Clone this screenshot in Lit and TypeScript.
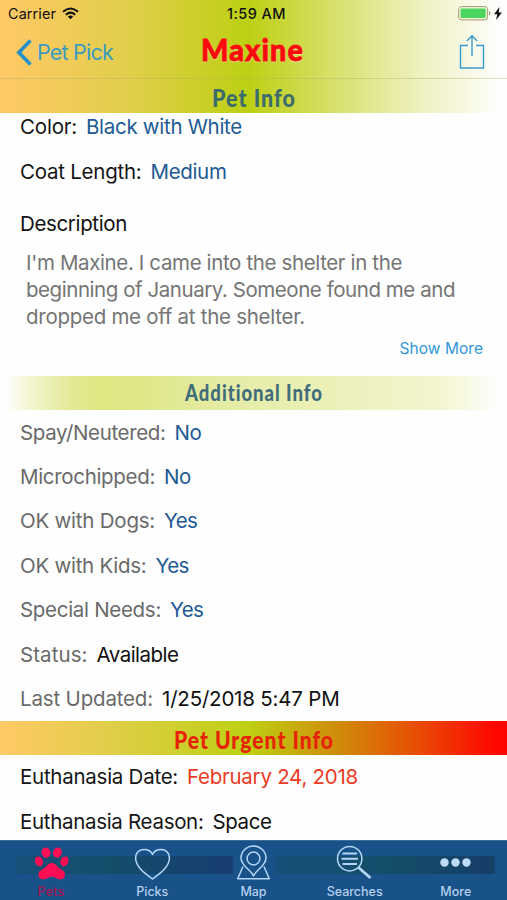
import { LitElement, html, css, svg } from "lit";
import { customElement, property } from "lit/decorators.js";

/* Text set to a given measure, either by tracking or by condensing the glyphs. */
@customElement("fit-text")
class FitText extends LitElement {
  @property() text = "";
  @property({ type: Number }) measure = 0;
  @property({ type: Boolean }) condense = false;
  static styles = css`
    :host { display: inline-block; white-space: nowrap; text-align: left; }
    .t { display: inline-block; white-space: pre; transform-origin: 0 50%; }
  `;
  updated() {
    const t = this.renderRoot.querySelector(".t") as HTMLElement;
    t.style.letterSpacing = this.condense ? "1.2px" : "0px";
    t.style.transform = "none";
    const natural = t.getBoundingClientRect().width;
    this.style.width = this.measure + "px";
    if (this.condense) t.style.transform = `scaleX(${this.measure / natural})`;
    else t.style.letterSpacing = (this.measure - natural) / this.text.length + "px";
  }
  render() {
    return html`<span class="t">${this.text}</span>`;
  }
}

type Row = [string, number, string, number, string];
const top: Row[] = [
  ["Color:", 57, "Black with White", 156, "dark blue"],
  ["Coat Length:", 121.5, "Medium", 76, "dark blue"],
];
const extra: Row[] = [
  ["Spay/Neutered:", 145.5, "No", 27, "grey blue"],
  ["Microchipped:", 135, "No", 27, "grey blue"],
  ["OK with Dogs:", 135, "Yes", 33, "grey blue"],
  ["OK with Kids:", 126.5, "Yes", 33, "grey blue"],
  ["Special Needs:", 141, "Yes", 33, "grey blue"],
  ["Status:", 67.5, "Available", 82, "grey black"],
  ["Last Updated:", 133, "1/25/2018 5:47 PM", 177.5, "grey black"],
];
const urgent: Row[] = [
  ["Euthanasia Date:", 158, "February 24, 2018", 171, "dark red"],
  ["Euthanasia Reason:", 183.5, "Space", 59, "dark black"],
];

const paw = svg`<g fill="#ff0d55">
  <ellipse cx="14" cy="7.600" rx="4.400" ry="5.200" transform="rotate(-10 14 7.600)"/>
  <ellipse cx="25.400" cy="7.600" rx="4.400" ry="5.200" transform="rotate(10 25.400 7.600)"/>
  <ellipse cx="7" cy="16.400" rx="3.900" ry="5.100" transform="rotate(-20 7 16.400)"/>
  <ellipse cx="32.400" cy="16.400" rx="3.900" ry="5.100" transform="rotate(20 32.400 16.400)"/>
  <path d="M19.700 18C22.500 18 24 20 26 22C28.500 24.500 33 25.500 33 29.500C33 33 30.500 35 27 34.300C24 33.700 22.500 31.800 19.700 31.800C17 31.800 15.500 33.700 12.400 34.300C9 35 6.400 33 6.400 29.500C6.400 25.500 11 24.500 13.400 22C15.500 20 17 18 19.700 18Z"/></g>`;
const heart = svg`<path d="M19.500 34C13 29 3 22.500 2.600 13.500C2.400 7.500 6.500 4.500 11 4.500C15 4.500 18 6 19.500 9.500C21 6 24 4.500 28 4.500C32.500 4.500 36.600 7.500 36.400 13.500C36 22.500 26 29 19.500 34Z"/>`;
const pin = svg`<path d="M19.500 31C17 25 7 20.500 7 13.200A12.500 12.300 0 0 1 32 13.200C32 20.500 22 25 19.500 31Z"/><circle cx="19.500" cy="13.500" r="6.400"/><path d="M9 21.500L3.700 33.700H35.300L30 21.500"/>`;
const search = svg`<circle cx="14.700" cy="13.700" r="12.200"/><path d="M7.500 8.500H22M6.500 13.700H23M7.500 19H22" stroke-width="2"/><path d="M23.500 22.500L35.500 33" stroke-width="2.800"/>`;
const dots = svg`<g fill="#bfdcf7" stroke="none"><circle cx="8.500" cy="17.500" r="4.200"/><circle cx="19.500" cy="17.500" r="4.200"/><circle cx="30.500" cy="17.500" r="4.200"/></g>`;

@customElement("app-root")
class AppRoot extends LitElement {
  static styles = css`
    :host { display: flex; flex-direction: column; height: 900px; overflow: hidden; background: #fefefe; font-family: Inter, "Liberation Sans", sans-serif; font-size: 20.5px; color: #111; }
    * { box-sizing: border-box; }
    svg { display: block; flex: none; }
    .head { height: 113px; flex: none; background: linear-gradient(90deg, #ffc966 0, #e2ce4c 25%, #bdd013 49%, #d8e06c 66%, #eff1c0 83%, #fefefe 99%); }
    .status { height: 26px; display: grid; grid-template-columns: 1fr auto 1fr; align-items: center; padding: 1px 5px 0 8px; font-size: 14.5px; }
    .carrier, .power { display: flex; align-items: center; gap: 6px; }
    .power { justify-content: flex-end; gap: 3px; }
    .clock { font-weight: 500; margin-left: 3px; }
    .nav { height: 53px; display: grid; grid-template-columns: 1fr auto 1fr; align-items: center; padding: 0 22px 0 16px; border-bottom: 1px solid #b0b06a66; }
    .back { display: flex; align-items: center; gap: 5px; color: #3a9bc0; font-size: 21.5px; }
    .share { justify-self: end; }
    .fancy { font-family: Lato, sans-serif; font-weight: 900; color: #3a6c6b; font-size: 25px; line-height: 36px; text-align: center; }
    .title { font-size: 30px; color: #fb0b0d; text-shadow: 0 1px 2px #fff9; -webkit-text-stroke: 0.8px #fb0b0d; margin: -6px 0 0 3px; }
    .body { flex: 1; min-height: 0; display: flex; flex-direction: column; }
    .rows { display: flex; flex-direction: column; flex: none; }
    .row { height: 44.400px; display: flex; align-items: center; gap: 9px; padding-left: 20px; flex: none; }
    .rows.first { margin-top: -8.500px; }
    .grey .label { color: #6a6a6a; }
    .dark .label { color: #161616; }
    .blue .value { color: #215a94; }
    .black .value { color: #111; }
    .red .value { color: #ea3b25; }
    .desc-title { height: 30px; display: flex; align-items: center; margin-top: 15.700px; padding-left: 20px; flex: none; }
    .desc { display: flex; flex-direction: column; padding: 10.500px 0 0 26px; color: #757575; flex: none; line-height: 27px; }
    .more { display: flex; justify-content: flex-end; padding: 9px 24px 0 0; font-size: 15.500px; line-height: 20px; color: #3297d8; height: 45.500px; flex: none; }
    .band { height: 34px; flex: none; }
    .band.add { background: linear-gradient(90deg, #fefefe 1%, #f2f4c8 7%, #e3e995 14%, #dfe783 20%, #dfe788 27%, #e5eca6 45%, #ecf0b8 65%, #f3f5cf 86%, #fefefe 99%); font-size: 22.500px; line-height: 34px; color: #416c7a; }
    .band.urgent { background: linear-gradient(90deg, #ffca66 0, #e0ce48 22%, #bdd013 49%, #d08a0a 67%, #e55604 80%, #ff0500 98%); color: #e62208; font-size: 25px; line-height: 36px; }
    .tabs { height: 60px; flex: none; display: grid; grid-template-columns: repeat(5, 101.200px); background: linear-gradient(90deg, #185289 0 14px, #175079 18px, #144d69 110px, #163f70 215px 232px, #185289 234px 274px, #164f76 278px, #144d69 390px, #163f68 480px 494px, #185289 496px) 0 15px / 507px 18px no-repeat, #185289; border-top: 1px solid #3f6d99; }
    .tab { display: flex; flex-direction: column; align-items: center; padding: 4px 0 0 1px; color: #b4cfec; font-size: 12.500px; font-weight: 500; line-height: 16px; gap: 3px; }
    .tab.on { color: #a5154f; }
  `;
  rows(list: Row[], cls = "") {
    return html`<div class="rows ${cls}">${list.map(
      ([l, lw, v, vw, c]) => html`<div class="row ${c}"><fit-text class="label" .text=${l} .measure=${lw}></fit-text><fit-text class="value" .text=${v} .measure=${vw}></fit-text></div>`
    )}</div>`;
  }
  tab(icon: unknown, text: string, w: number, on = false) {
    return html`<div class="tab ${on ? "on" : ""}"><svg width="39" height="36" viewBox="0 0 39 36" fill="none" stroke=${on ? "none" : "#b4d7f7"} stroke-width="1.500" stroke-linejoin="round">${icon}</svg><fit-text .text=${text} .measure=${w}></fit-text></div>`;
  }
  render() {
    return html`
      <div class="head">
        <div class="status">
          <div class="carrier"><fit-text .text=${"Carrier"} .measure=${48}></fit-text>
            <svg width="17" height="13" viewBox="0 0 17 13" fill="none" stroke="#111" stroke-width="2.100"><path d="M1 4.800Q8.500-1.800 16 4.800M3.800 7.800Q8.500 3.600 13.200 7.800"/><path d="M8.500 12.300L5.800 9.600Q8.500 7.600 11.200 9.600Z" fill="#111" stroke="none"/></svg>
          </div>
          <fit-text class="clock" .text=${"1:59 AM"} .measure=${59}></fit-text>
          <div class="power">
            <svg width="33" height="15" viewBox="0 0 33 15"><rect x=".6" y=".6" width="29" height="13.300" rx="3" fill="#f5f7d7" stroke="#9a9b78"/><rect x="2.500" y="2.500" width="25.200" height="9.500" rx="1.400" fill="#4bd55f"/><path d="M31 4.800Q33.500 7.200 31 9.800Z" fill="#9a9b78"/></svg>
            <svg width="8" height="13" viewBox="0 0 8 13"><path d="M5.500 0L0 7.200H3.300L2 13L8 5.400H4.700Z" fill="#111"/></svg>
          </div>
        </div>
        <div class="nav">
          <div class="back"><svg width="16" height="27" viewBox="0 0 16 27" fill="none" stroke="#2590cc" stroke-width="3.600"><path d="M14.500 1.500L2.800 13.500L14.500 25.500"/></svg><fit-text .text=${"Pet Pick"} .measure=${76}></fit-text></div>
          <fit-text class="fancy title" condense .text=${"Maxine"} .measure=${103}></fit-text>
          <svg class="share" width="26" height="36" viewBox="0 0 26 36" fill="none" stroke="#3a9ad0" stroke-width="1.400"><path d="M9 11.500H1.500V34H24.500V11.500H17M13 22V2M7.800 7L13 1.700L18.200 7"/></svg>
        </div>
        <div class="fancy"><fit-text condense .text=${"Pet Info"} .measure=${84}></fit-text></div>
      </div>
      <div class="body">
        ${this.rows(top, "first")}
        <div class="desc-title"><fit-text .text=${"Description"} .measure=${107}></fit-text></div>
        <div class="desc">
          <fit-text .text=${"I'm Maxine. I came into the shelter in the"} .measure=${376}></fit-text>
          <fit-text .text=${"beginning of January. Someone found me and"} .measure=${429}></fit-text>
          <fit-text .text=${"dropped me off at the shelter."} .measure=${279}></fit-text>
        </div>
        <div class="more"><fit-text .text=${"Show More"} .measure=${83.5}></fit-text></div>
        <div class="band add fancy"><fit-text condense .text=${"Additional Info"} .measure=${138}></fit-text></div>
        ${this.rows(extra)}
        <div class="band urgent fancy"><fit-text condense .text=${"Pet Urgent Info"} .measure=${160}></fit-text></div>
        ${this.rows(urgent)}
      </div>
      <div class="tabs">
        ${this.tab(paw, "Pets", 27, true)}
        ${this.tab(heart, "Picks", 32)}
        ${this.tab(pin, "Map", 26)}
        ${this.tab(search, "Searches", 56)}
        ${this.tab(dots, "More", 31)}
      </div>`;
  }
}
